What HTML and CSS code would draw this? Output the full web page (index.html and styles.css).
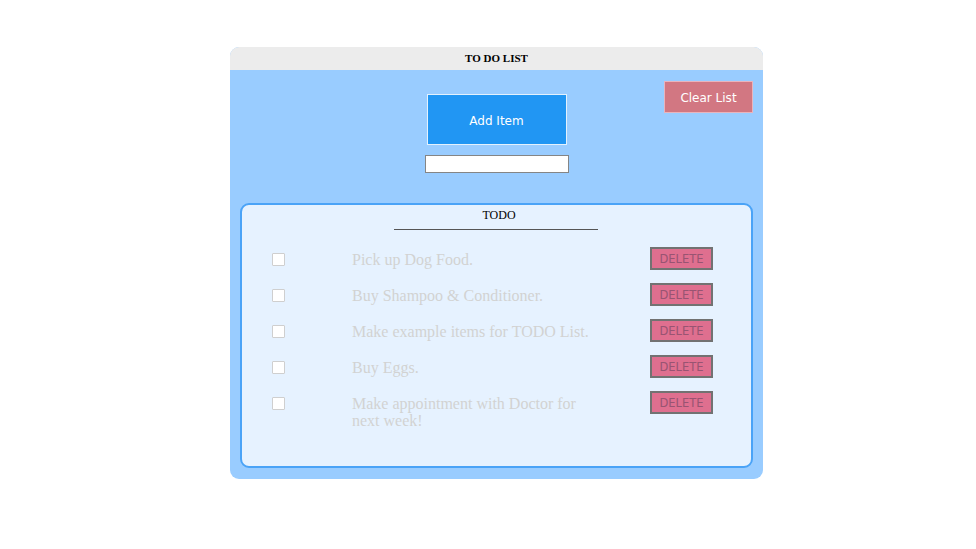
FILE: index.html
```
<!DOCTYPE html>
<html>
<head>
<meta charset="utf-8">
<link rel="stylesheet" href="styles.css">
</head>
<body>
<div class="app">
  <div class="app-header">TO DO LIST</div>
  <div class="app-body">
    <div class="controls">
      <div class="spacer"></div>
      <div class="add-area">
        <button class="add-btn">Add Item</button>
        <input class="item-input" type="text">
      </div>
      <div class="clear-area">
        <button class="clear-btn">Clear List</button>
      </div>
    </div>
    <div class="card">
      <div class="card-title">TODO</div>
      <div class="card-rule"></div>
      <ul class="items">
        <li class="item"><input class="check" type="checkbox"><span class="item-text">Pick up Dog Food.</span><button class="del-btn">DELETE</button></li>
        <li class="item"><input class="check" type="checkbox"><span class="item-text">Buy Shampoo &amp; Conditioner.</span><button class="del-btn">DELETE</button></li>
        <li class="item"><input class="check" type="checkbox"><span class="item-text">Make example items for TODO List.</span><button class="del-btn">DELETE</button></li>
        <li class="item"><input class="check" type="checkbox"><span class="item-text">Buy Eggs.</span><button class="del-btn">DELETE</button></li>
        <li class="item"><input class="check" type="checkbox"><span class="item-text">Make appointment with Doctor for next week!</span><button class="del-btn">DELETE</button></li>
      </ul>
    </div>
  </div>
</div>
</body>
</html>
```
FILE: styles.css
```
* { box-sizing: border-box; }
html, body { margin: 0; padding: 0; background: #ffffff; }
body { padding-top: 47px; }

.app {
  width: 533px;
  margin-left: 230px;
  border-radius: 9px;
  overflow: hidden;
  background: #99ccff;
}

.app-header {
  height: 23px;
  background: #ececec;
  text-align: center;
  font-family: "Liberation Serif", serif;
  font-weight: bold;
  font-size: 11px;
  line-height: 23px;
  color: #000;
}

.app-body {
  padding: 11px 10px 11px 10px;
}

.controls {
  display: grid;
  grid-template-columns: 1fr auto 1fr;
}

.add-area {
  display: flex;
  flex-direction: column;
  align-items: center;
  padding-top: 13px;
}

.add-btn {
  width: 140px;
  height: 51px;
  background: #2196f3;
  border: 1px solid #e3f1fd;
  color: #ffffff;
  font-family: "DejaVu Sans", Verdana, sans-serif;
  font-size: 12px;
  padding: 2px 0 0 0;
  margin: 0;
}

.item-input {
  margin-top: 10px;
  width: 144px;
  height: 18px;
  border: 1px solid #858585;
  background: #ffffff;
  padding: 0;
}

.clear-area {
  display: flex;
  justify-content: flex-end;
  align-items: flex-start;
}

.clear-btn {
  width: 89px;
  height: 32px;
  background: #d27782;
  border: 1px solid #e9b4bd;
  color: #ffffff;
  font-family: "DejaVu Sans", Verdana, sans-serif;
  font-size: 12px;
  padding: 2px 0 0 0;
  margin: 0;
}

.card {
  margin-top: 30px;
  height: 265px;
  background: #e6f2ff;
  border: 2px solid #4aa3f7;
  border-radius: 9px;
  padding-top: 3px;
}

.card-title {
  text-align: center;
  font-family: "Liberation Serif", serif;
  font-size: 12px;
  line-height: 14px;
  color: #000;
  padding-left: 5px;
}

.card-rule {
  width: 204px;
  height: 1px;
  margin: 7px auto 0 auto;
  background: #555555;
  position: relative;
  left: -1px;
}

.items {
  list-style: none;
  margin: 17px 0 0 0;
  padding: 0;
  display: flex;
  flex-direction: column;
  gap: 13px;
}

.item {
  display: flex;
  align-items: flex-start;
  padding-left: 30px;
  padding-right: 38px;
  min-height: 23px;
}

.check {
  appearance: none;
  -webkit-appearance: none;
  width: 13px;
  height: 13px;
  margin: 6px 0 0 0;
  border: 1px solid #cfcfcf;
  border-radius: 1px;
  background: #ffffff;
  flex: none;
}

.item-text {
  margin-left: 67px;
  margin-top: 4px;
  width: 248px;
  font-family: "Liberation Serif", serif;
  font-size: 16px;
  line-height: 17px;
  color: #d2d2d2;
}

.del-btn {
  margin-left: auto;
  width: 63px;
  height: 23px;
  background: #df6f8f;
  border: 2px solid #727272;
  color: #985472;
  font-family: "DejaVu Sans", Verdana, sans-serif;
  font-size: 11.5px;
  padding: 1px 0 0 0;
  flex: none;
}
```
